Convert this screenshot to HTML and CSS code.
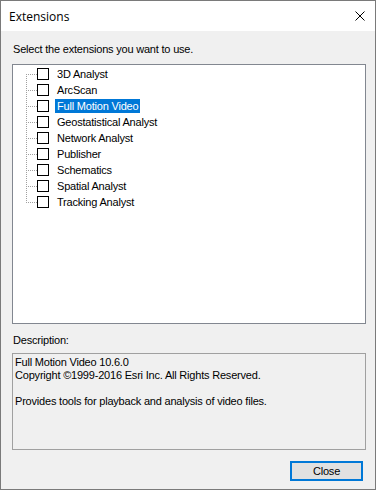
FILE: index.html
```html
<!DOCTYPE html>
<html lang="en">
<head>
  <meta charset="UTF-8">
  <title>Extensions</title>
  <link rel="stylesheet" href="styles.css">
</head>
<body>

  <div class="window">
    <div class="titlebar">
      <span class="title">Extensions</span>
      <span class="close-x">
        <svg width="10" height="10" viewBox="0 0 10 10">
          <path d="M0.5 0.5 L9.5 9.5 M9.5 0.5 L0.5 9.5" stroke="#000" stroke-width="1" fill="none"/>
        </svg>
      </span>
    </div>

    <div class="content">
      <div class="label">Select the extensions you want to use.</div>

      <div class="tree">
        <div class="node first"><span class="branch"></span><span class="check"></span><span class="text">3D Analyst</span></div>
        <div class="node"><span class="branch"></span><span class="check"></span><span class="text">ArcScan</span></div>
        <div class="node"><span class="branch"></span><span class="check"></span><span class="text selected">Full Motion Video</span></div>
        <div class="node"><span class="branch"></span><span class="check"></span><span class="text">Geostatistical Analyst</span></div>
        <div class="node"><span class="branch"></span><span class="check"></span><span class="text">Network Analyst</span></div>
        <div class="node"><span class="branch"></span><span class="check"></span><span class="text">Publisher</span></div>
        <div class="node"><span class="branch"></span><span class="check"></span><span class="text">Schematics</span></div>
        <div class="node"><span class="branch"></span><span class="check"></span><span class="text">Spatial Analyst</span></div>
        <div class="node last"><span class="branch"></span><span class="check"></span><span class="text">Tracking Analyst</span></div>
      </div>

      <div class="label desc-label">Description:</div>
      <div class="desc">Full Motion Video 10.6.0
Copyright ©1999-2016 Esri Inc. All Rights Reserved.

Provides tools for playback and analysis of video files.</div>

      <div class="buttons">
        <button class="btn">Close</button>
      </div>
    </div>
  </div>

</body>
</html>
```

FILE: styles.css
```css
body {
  margin: 0;
  font-family: "Liberation Sans", Arial, sans-serif;
  font-size: 11px;
  letter-spacing: -0.2px;
  color: #000;
}

.window {
  width: 376px;
  height: 490px;
  box-sizing: border-box;
  border: 1px solid #7a7a7a;
  display: flex;
  flex-direction: column;
  background-color: #f0f0f0;
}

.titlebar {
  height: 30px;
  background-color: #fff;
  display: flex;
  align-items: center;
  justify-content: space-between;
  padding: 0 10px 0 8px;
}

.title {
  font-family: "Open Sans", "Liberation Sans", sans-serif;
  font-size: 12px;
  letter-spacing: 0;
}

.close-x {
  display: flex;
  width: 10px;
  height: 10px;
}

.content {
  flex: 1;
  display: flex;
  flex-direction: column;
  padding: 12px 9px 0 11px;
}

.label {
  line-height: 13px;
  height: 13px;
  padding-left: 1px;
}

.tree {
  margin-top: 8px;
  height: 260px;
  box-sizing: border-box;
  background-color: #fff;
  border: 1px solid #828790;
  padding: 1px 0 0 13px;
}

.node {
  display: flex;
  align-items: center;
  height: 16px;
}

.branch {
  width: 11px;
  height: 16px;
  flex-shrink: 0;
  background:
    repeating-linear-gradient(to right, #a0a0a0 0 1px, transparent 1px 2px) 0 8px / 11px 1px no-repeat,
    repeating-linear-gradient(to bottom, #a0a0a0 0 1px, transparent 1px 2px) 0 0 / 1px 16px no-repeat;
}

.node.first .branch {
  background:
    repeating-linear-gradient(to right, #a0a0a0 0 1px, transparent 1px 2px) 0 8px / 11px 1px no-repeat,
    repeating-linear-gradient(to bottom, #a0a0a0 0 1px, transparent 1px 2px) 0 8px / 1px 8px no-repeat;
}

.node.last .branch {
  background:
    repeating-linear-gradient(to right, #a0a0a0 0 1px, transparent 1px 2px) 0 8px / 11px 1px no-repeat,
    repeating-linear-gradient(to bottom, #a0a0a0 0 1px, transparent 1px 2px) 0 0 / 1px 9px no-repeat;
}

.check {
  width: 12px;
  height: 12px;
  box-sizing: border-box;
  border: 1px solid #000;
  background-color: #fff;
  margin-right: 6px;
  flex-shrink: 0;
}

.text {
  height: 14px;
  line-height: 14px;
  padding: 0 2px;
  white-space: nowrap;
}

.text.selected {
  background-color: #0078d7;
  color: #fff;
}

.desc-label {
  margin-top: 10px;
}

.desc {
  margin-top: 6px;
  height: 97px;
  box-sizing: border-box;
  border: 1px solid #a0a0a0;
  background-color: #f0f0f0;
  padding: 2px 2px;
  line-height: 13px;
  white-space: pre-wrap;
}

.buttons {
  display: flex;
  justify-content: flex-end;
  margin-top: 11px;
  padding-right: 3px;
}

.btn {
  width: 73px;
  height: 20px;
  box-sizing: border-box;
  border: 2px solid #0078d7;
  background-color: #e1e1e1;
  font-family: "Liberation Sans", Arial, sans-serif;
  font-size: 11px;
  letter-spacing: -0.2px;
  color: #000;
  padding: 0;
}
```
